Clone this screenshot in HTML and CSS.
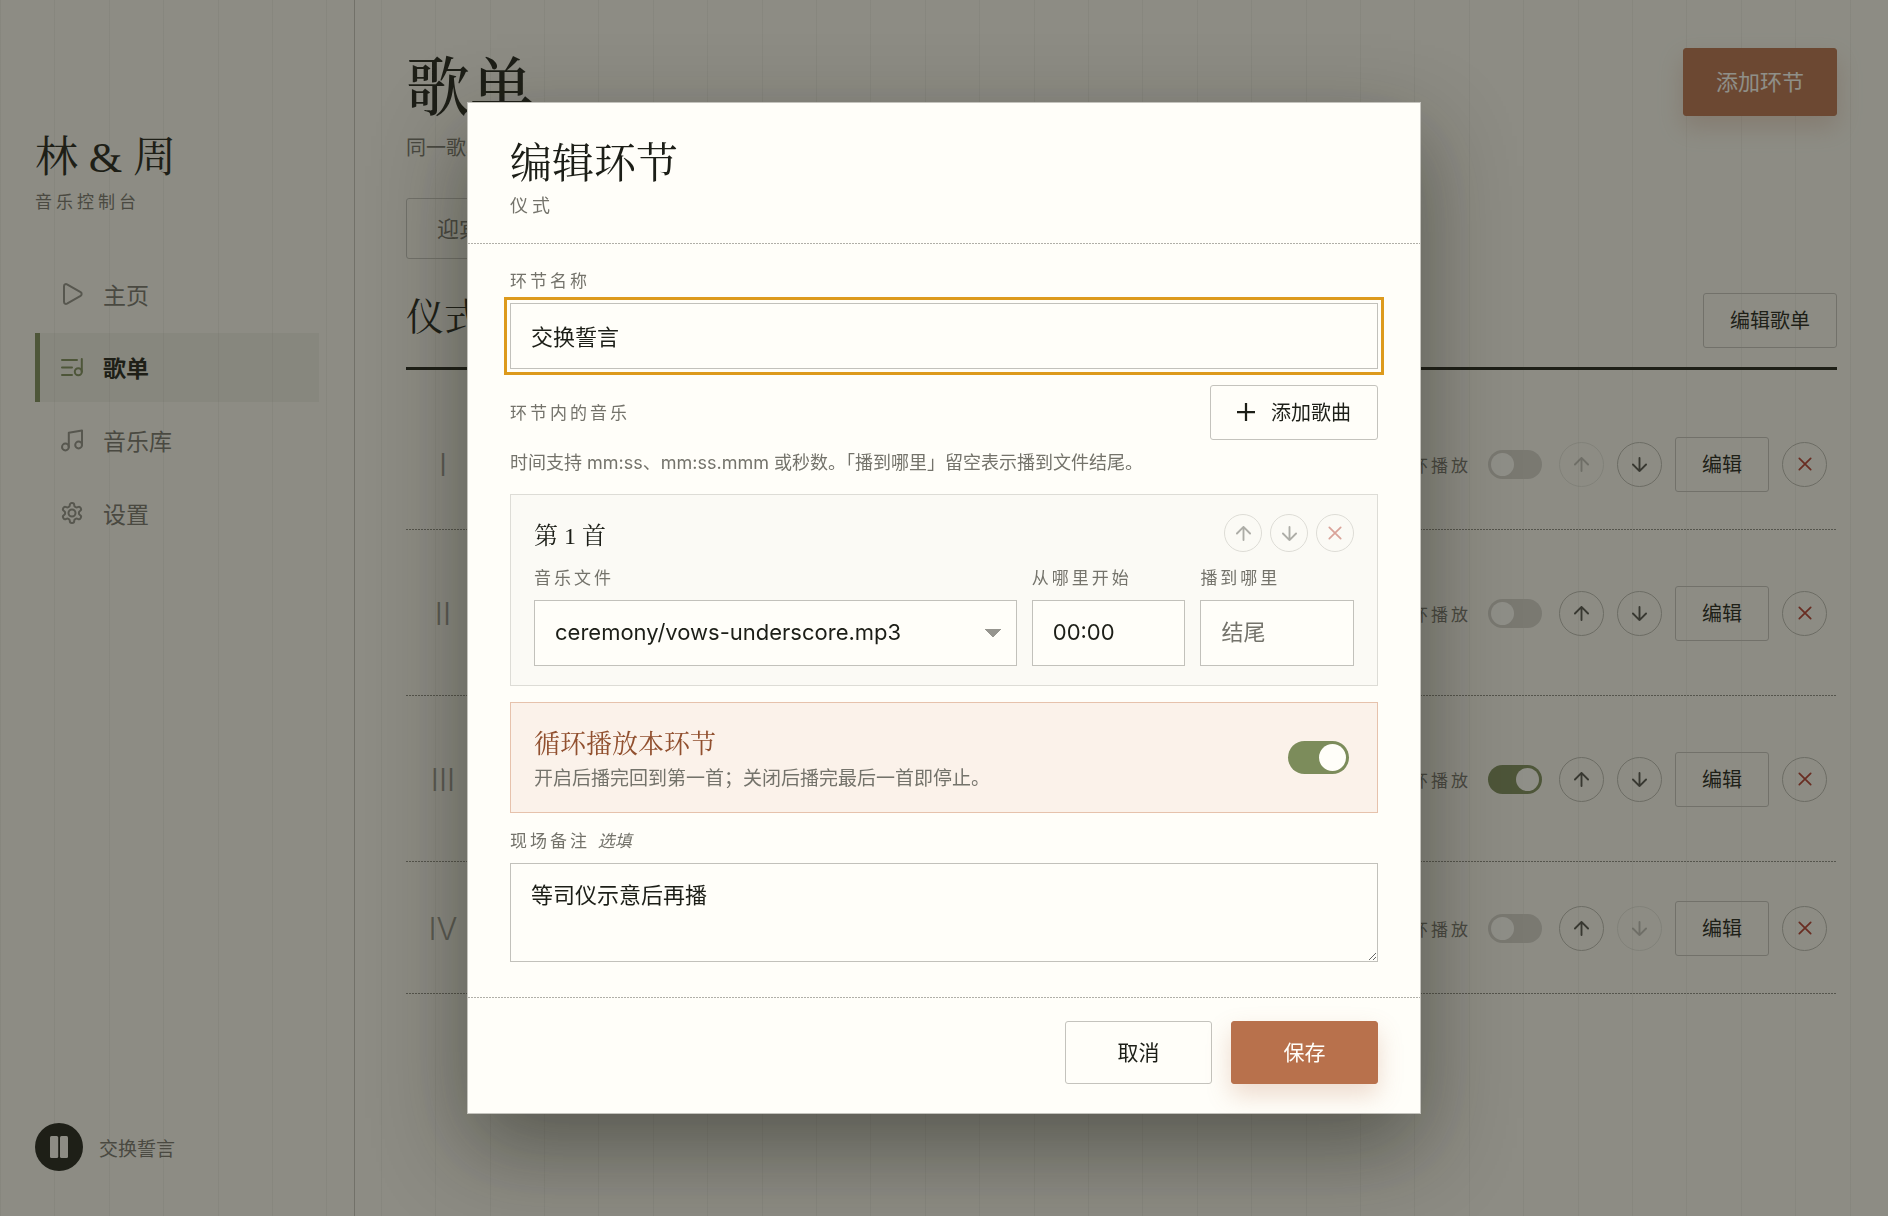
FILE: index.html
```html
<!DOCTYPE html>
<html lang="zh-CN">
<head>
    <meta charset="UTF-8">
    <meta name="viewport" content="width=device-width, initial-scale=1.0">
    <title>歌单 - 音乐控制台</title>
    <link rel="stylesheet" href="styles.css">
</head>
<body>
    <!-- Shared icons -->
    <svg class="sprite" aria-hidden="true">
        <symbol id="up" viewBox="0 0 16 16"><path d="M8 15V1M1 8l7-7 7 7"/></symbol>
        <symbol id="down" viewBox="0 0 16 16"><path d="M8 1v14M1 8l7 7 7-7"/></symbol>
        <symbol id="close" viewBox="0 0 16 16"><path d="M1.500 1.500l13 13M14.500 1.500l-13 13"/></symbol>
        <symbol id="plus" viewBox="0 0 16 16"><path d="M8 0v16M0 8h16"/></symbol>
    </svg>

    <div class="layout">
        <aside class="sidebar">
            <div class="brand">林 &amp; 周</div>
            <div class="brand-sub">音乐控制台</div>
            <nav class="nav">
                <a class="nav-item" href="#home">
                    <svg class="nav-icon" viewBox="0 0 22 22"><path d="M3 3.200v15.600c0 1.800 1.600 2.600 3 1.900l13.600-7.900c1.400-.8 1.400-2.800 0-3.600L6 1.300C4.600.6 3 1.400 3 3.200z"/></svg>
                    主页
                </a>
                <a class="nav-item active" href="#playlist" aria-current="page">
                    <svg class="nav-icon" viewBox="0 0 22 22"><path d="M1 4h15M1 11.500h10M1 19h10M20.800 3v12.700"/><circle cx="17.300" cy="15.700" r="3.500"/></svg>
                    歌单
                </a>
                <a class="nav-item" href="#library">
                    <svg class="nav-icon" viewBox="0 0 22 22"><path d="M7.800 18V3.800l13.200-2.300V16"/><circle cx="4.400" cy="18" r="3.400"/><circle cx="17.600" cy="16" r="3.400"/></svg>
                    音乐库
                </a>
                <a class="nav-item" href="#settings">
                    <svg class="nav-icon" viewBox="1 1 22 22"><path d="M12.220 2h-.44a2 2 0 0 0-2 2v.18a2 2 0 0 1-1 1.730l-.43.25a2 2 0 0 1-2 0l-.15-.08a2 2 0 0 0-2.730.73l-.22.38a2 2 0 0 0 .73 2.730l.15.1a2 2 0 0 1 1 1.720v.51a2 2 0 0 1-1 1.740l-.15.09a2 2 0 0 0-.73 2.730l.22.38a2 2 0 0 0 2.730.73l.15-.08a2 2 0 0 1 2 0l.43.25a2 2 0 0 1 1 1.730V20a2 2 0 0 0 2 2h.44a2 2 0 0 0 2-2v-.18a2 2 0 0 1 1-1.730l.43-.25a2 2 0 0 1 2 0l.15.08a2 2 0 0 0 2.730-.73l.22-.39a2 2 0 0 0-.73-2.730l-.15-.08a2 2 0 0 1-1-1.740v-.5a2 2 0 0 1 1-1.740l.15-.09a2 2 0 0 0 .73-2.730l-.22-.38a2 2 0 0 0-2.730-.73l-.15.08a2 2 0 0 1-2 0l-.43-.25a2 2 0 0 1-1-1.730V4a2 2 0 0 0-2-2z"/><circle cx="12" cy="12" r="3.500"/></svg>
                    设置
                </a>
            </nav>
            <div class="player">
                <button class="pause-btn" type="button" aria-label="暂停">
                    <svg viewBox="0 0 18 22"><rect width="8.200" height="22" rx="1.500"/><rect x="10" width="8" height="22" rx="1.500"/></svg>
                </button>
                <span>交换誓言</span>
            </div>
        </aside>

        <main class="main">
            <header class="page-head">
                <div>
                    <h1>歌单</h1>
                    <p>同一歌单</p>
                </div>
                <button class="btn primary add-btn" type="button">添加环节</button>
            </header>
            <div class="tabs">
                <button class="tab" type="button">迎宾</button>
            </div>
            <div class="section-head">
                <h2>仪式</h2>
                <button class="btn small" type="button">编辑歌单</button>
            </div>
            <ol class="rows">
                <li class="row">
                    <span class="numeral">I</span>
                    <label class="loop-label">循环播放<input class="switch" type="checkbox"></label>
                    <button class="round" type="button" aria-label="上移" disabled><svg><use href="#up"/></svg></button>
                    <button class="round" type="button" aria-label="下移"><svg><use href="#down"/></svg></button>
                    <button class="btn small" type="button">编辑</button>
                    <button class="round danger" type="button" aria-label="删除"><svg><use href="#close"/></svg></button>
                </li>
                <li class="row tall">
                    <span class="numeral">II</span>
                    <label class="loop-label">循环播放<input class="switch" type="checkbox"></label>
                    <button class="round" type="button" aria-label="上移"><svg><use href="#up"/></svg></button>
                    <button class="round" type="button" aria-label="下移"><svg><use href="#down"/></svg></button>
                    <button class="btn small" type="button">编辑</button>
                    <button class="round danger" type="button" aria-label="删除"><svg><use href="#close"/></svg></button>
                </li>
                <li class="row tall">
                    <span class="numeral">III</span>
                    <label class="loop-label">循环播放<input class="switch" type="checkbox" checked></label>
                    <button class="round" type="button" aria-label="上移"><svg><use href="#up"/></svg></button>
                    <button class="round" type="button" aria-label="下移"><svg><use href="#down"/></svg></button>
                    <button class="btn small" type="button">编辑</button>
                    <button class="round danger" type="button" aria-label="删除"><svg><use href="#close"/></svg></button>
                </li>
                <li class="row">
                    <span class="numeral">IV</span>
                    <label class="loop-label">循环播放<input class="switch" type="checkbox"></label>
                    <button class="round" type="button" aria-label="上移"><svg><use href="#up"/></svg></button>
                    <button class="round" type="button" aria-label="下移" disabled><svg><use href="#down"/></svg></button>
                    <button class="btn small" type="button">编辑</button>
                    <button class="round danger" type="button" aria-label="删除"><svg><use href="#close"/></svg></button>
                </li>
            </ol>
        </main>
    </div>

    <div class="overlay">
        <form class="dialog" role="dialog" aria-modal="true" aria-labelledby="dialogTitle">
            <header class="dialog-head">
                <h2 id="dialogTitle">编辑环节</h2>
                <p>仪式</p>
            </header>

            <div class="dialog-body">
                <div class="field">
                    <label for="name">环节名称</label>
                    <input class="control focused" id="name" type="text" value="交换誓言">
                </div>

                <div>
                    <div class="music-head">
                        <span class="label">环节内的音乐</span>
                        <button class="btn small" type="button"><svg class="plus"><use href="#plus"/></svg>添加歌曲</button>
                    </div>
                    <p class="help">时间支持 mm:ss、mm:ss.mmm 或秒数。「播到哪里」留空表示播到文件结尾。</p>
                    <div class="song">
                        <div class="song-head">
                            <h3>第 1 首</h3>
                            <div class="song-actions">
                                <button class="round mini" type="button" aria-label="上移" disabled><svg><use href="#up"/></svg></button>
                                <button class="round mini" type="button" aria-label="下移" disabled><svg><use href="#down"/></svg></button>
                                <button class="round mini danger" type="button" aria-label="删除" disabled><svg><use href="#close"/></svg></button>
                            </div>
                        </div>
                        <div class="song-fields">
                            <div class="field">
                                <label for="file">音乐文件</label>
                                <select class="control" id="file">
                                    <option>ceremony/vows-underscore.mp3</option>
                                </select>
                            </div>
                            <div class="field">
                                <label for="start">从哪里开始</label>
                                <input class="control" id="start" type="text" value="00:00">
                            </div>
                            <div class="field">
                                <label for="end">播到哪里</label>
                                <input class="control" id="end" type="text" placeholder="结尾">
                            </div>
                        </div>
                    </div>
                </div>

                <div class="loop-card">
                    <label for="loop">
                        <strong>循环播放本环节</strong>
                        <span>开启后播完回到第一首；关闭后播完最后一首即停止。</span>
                    </label>
                    <input class="switch large" id="loop" type="checkbox" checked>
                </div>

                <div class="field">
                    <label for="note">现场备注 <em>选填</em></label>
                    <textarea class="control" id="note">等司仪示意后再播</textarea>
                </div>
            </div>

            <footer class="dialog-foot">
                <button class="btn" type="button">取消</button>
                <button class="btn primary" type="button">保存</button>
            </footer>
        </form>
    </div>
</body>
</html>
```

FILE: styles.css
```css
:root {
    --ink: #1c1e17;
    --muted: #74736b;
    --line: #c4c3bd;
    --paper: #fffef9;
    --page: #faf9f1;
    --green: #7c8c5b;
    --clay: #b8714c;
    --rule: rgba(60, 60, 40, 0.06);
    --serif: "Liberation Serif", "Noto Serif CJK SC", "Noto Sans CJK SC", serif;
    --sans: Inter, "Noto Sans CJK SC", sans-serif;
}

* {
    box-sizing: border-box;
}

body {
    margin: 0;
    min-height: 100vh;
    font-family: var(--sans);
    font-size: 20px;
    color: var(--ink);
    background-color: var(--page);
    /* Faint vertical paper lines, five to a tile */
    background-image: linear-gradient(90deg,
        var(--rule) 1px, transparent 1px 54px,
        var(--rule) 54px 55px, transparent 55px 109px,
        var(--rule) 109px 110px, transparent 110px 163px,
        var(--rule) 163px 164px, transparent 164px 218px,
        var(--rule) 218px 219px, transparent 219px);
    background-size: 272px 100%;
}

h1, h2, h3, p {
    margin: 0;
    font-weight: 400;
}

h1, h2, h3 {
    font-family: var(--serif);
}

button, input, select, textarea {
    font-family: inherit;
    color: inherit;
}

button {
    cursor: pointer;
}

svg {
    fill: none;
    stroke: currentColor;
    stroke-width: 2;
    stroke-linecap: round;
    stroke-linejoin: round;
}

.sprite {
    display: none;
}

.layout {
    display: flex;
    min-height: 100vh;
}

/* Sidebar */
.sidebar {
    flex: 0 0 355px;
    display: flex;
    flex-direction: column;
    padding: 132px 35px 45px;
    border-right: 1px solid #c4c3ba;
}

.brand {
    font-family: var(--serif);
    font-size: 43px;
    line-height: 52px;
}

.brand-sub {
    margin-top: 6px;
    font-size: 17px;
    line-height: 24px;
    letter-spacing: 4px;
    color: var(--muted);
}

.nav {
    display: flex;
    flex-direction: column;
    gap: 4px;
    margin-top: 46px;
}

.nav-item {
    display: flex;
    align-items: center;
    gap: 20px;
    height: 69px;
    padding: 0 0 2px 21px;
    border-left: 5px solid transparent;
    font-size: 23px;
    color: var(--muted);
    text-decoration: none;
}

.nav-item.active {
    border-color: var(--green);
    background: rgba(60, 60, 50, 0.06);
    font-weight: 700;
    color: var(--ink);
}

.nav-icon {
    width: 22px;
    height: 22px;
    overflow: visible;
    color: #8f8e86;
}

.active .nav-icon {
    color: var(--green);
}

.player {
    display: flex;
    align-items: center;
    gap: 16px;
    margin-top: auto;
    font-size: 19px;
    color: var(--muted);
}

.pause-btn {
    display: grid;
    place-items: center;
    width: 48px;
    height: 48px;
    padding: 0;
    border: 0;
    border-radius: 50%;
    background: var(--ink);
}

.pause-btn svg {
    width: 18px;
    height: 22px;
    fill: var(--page);
    stroke: none;
}

/* Buttons */
.btn {
    display: inline-flex;
    align-items: center;
    justify-content: center;
    gap: 16px;
    min-width: 147px;
    height: 63px;
    padding: 0 26px 3px;
    border: 1px solid var(--line);
    border-radius: 3px;
    background: transparent;
    font-size: 21px;
}

.btn.small {
    min-width: 94px;
    height: 55px;
    padding-bottom: 2px;
    font-size: 20px;
}

.btn.primary {
    border-color: var(--clay);
    background: var(--clay);
    color: var(--paper);
    box-shadow: 0 11px 25px rgba(184, 113, 76, 0.25);
}

.btn.add-btn {
    height: 68px;
    padding: 0 32px 4px;
    font-size: 22px;
}

.plus {
    width: 18px;
    height: 18px;
    overflow: visible;
}

.round {
    display: grid;
    place-items: center;
    flex: none;
    width: 45px;
    height: 45px;
    padding: 0;
    border: 1px solid #b9b8b0;
    border-radius: 50%;
    background: transparent;
    color: #50514a;
}

.round svg {
    width: 15px;
    height: 15px;
    overflow: visible;
}

.round:disabled {
    opacity: 0.35;
}

.round.danger {
    color: #b23a2c;
}

.round.danger svg {
    width: 14px;
    height: 14px;
}

.round.mini {
    width: 38px;
    height: 38px;
}

.round.mini:disabled {
    opacity: 0.45;
}

.switch {
    appearance: none;
    flex: none;
    width: 54px;
    height: 29px;
    margin: 0;
    padding: 3px;
    border-radius: 17px;
    background: #d4d2cb;
}

.switch::before {
    content: "";
    display: block;
    width: 23px;
    height: 23px;
    border-radius: 50%;
    background: var(--paper);
}

.switch:checked {
    background: var(--green);
}

.switch:checked::before {
    margin-left: auto;
}

.switch.large {
    width: 61px;
    height: 33px;
}

.switch.large::before {
    width: 27px;
    height: 27px;
}

/* Playlist page */
.main {
    flex: 1;
    min-width: 0;
    padding: 48px 51px 48px;
}

.page-head {
    display: flex;
    justify-content: space-between;
    align-items: flex-start;
}

.page-head h1 {
    font-size: 64px;
    font-weight: 500;
    line-height: 82px;
}

.page-head p {
    margin-top: 3px;
    line-height: 30px;
    color: var(--muted);
}

.tabs {
    display: flex;
    margin-top: 35px;
}

.tab {
    height: 61px;
    padding: 0 30px 4px;
    border: 1px solid var(--line);
    border-radius: 3px;
    background: transparent;
    font-size: 22px;
    color: var(--muted);
}

.section-head {
    display: flex;
    justify-content: space-between;
    align-items: flex-end;
    margin-top: 24px;
    padding-bottom: 19px;
    border-bottom: 3px solid var(--ink);
}

.section-head h2 {
    font-size: 38px;
    line-height: 62px;
}

.rows {
    margin: 0;
    padding: 28px 0 0;
    list-style: none;
}

.section-head .btn {
    margin-top: 10px;
}

.row {
    display: flex;
    align-items: center;
    gap: 13px;
    min-height: 132px;
    padding-right: 10px;
    background: repeating-linear-gradient(90deg, #8b8a82 0 2px, transparent 2px 3px) bottom / 100% 1px no-repeat;
}

.row.tall {
    min-height: 166px;
}

.numeral {
    width: 74px;
    font-size: 31px;
    font-weight: 300;
    text-align: center;
    color: #96958d;
}

.loop-label {
    display: flex;
    align-items: center;
    gap: 17px;
    margin-left: auto;
    margin-right: 4px;
    font-size: 17px;
    letter-spacing: 3px;
    color: var(--muted);
}

/* Edit dialog */
.overlay {
    position: fixed;
    inset: 0;
    display: flex;
    align-items: center;
    justify-content: center;
    background: rgba(31, 31, 24, 0.5);
}

.dialog {
    width: 954px;
    max-width: 96%;
    border: 1px solid var(--line);
    background: var(--paper);
    box-shadow: 0 34px 84px rgba(24, 24, 16, 0.45);
}

.dialog-head {
    padding: 38px 42px 25px;
    background: repeating-linear-gradient(90deg, #b0afa8 0 2px, transparent 2px 3px) bottom / 100% 1px no-repeat;
}

.dialog-head h2 {
    font-size: 42px;
    line-height: 46px;
}

.dialog-head p {
    margin-top: 6px;
    font-size: 18px;
    line-height: 26px;
    letter-spacing: 4px;
    color: var(--muted);
}

.dialog-body {
    display: flex;
    flex-direction: column;
    gap: 16px;
    padding: 25px 42px 35px;
}

.field {
    display: flex;
    flex-direction: column;
    gap: 10px;
    min-width: 0;
}

.field label,
.label {
    font-size: 17px;
    line-height: 24px;
    letter-spacing: 3px;
    color: var(--muted);
}

.field em {
    letter-spacing: 0;
}

.control {
    width: 100%;
    height: 66px;
    padding: 0 20px 2px;
    border: 1px solid #c2c1bb;
    border-radius: 0;
    background-color: var(--paper);
    font-size: 22px;
    line-height: 32px;
}

.control::placeholder {
    color: var(--muted);
}

.control.focused {
    outline: 3px solid #dd9a1c;
    outline-offset: 3px;
}

select.control {
    appearance: none;
    background-image: linear-gradient(to top right, transparent 50%, #96958f 50%), linear-gradient(to top left, transparent 50%, #96958f 50%);
    background-position: right 23px center, right 15px center;
    background-repeat: no-repeat;
    background-size: 8px 8px;
}

textarea.control {
    display: block;
    height: 99px;
    padding: 15px 20px;
    resize: vertical;
}

.music-head {
    display: flex;
    align-items: center;
    justify-content: space-between;
}

.help {
    margin: 11px 0 19px;
    font-size: 18px;
    line-height: 24px;
    color: var(--muted);
}

.song {
    padding: 19px 23px;
    border: 1px solid #dddcd6;
    background: #fbfaf5;
}

.song-head {
    display: flex;
    align-items: center;
    justify-content: space-between;
    margin-bottom: 14px;
}

.song-head h3 {
    font-size: 24px;
}

.song-actions {
    display: flex;
    gap: 8px;
}

.song-fields {
    display: grid;
    grid-template-columns: 22fr 7fr 7fr;
    gap: 15px;
}

.loop-card {
    display: flex;
    align-items: center;
    justify-content: space-between;
    padding: 24px 28px 19px 23px;
    border: 1px solid #e6c2ac;
    background: #fbf2ea;
}

.loop-card strong,
.loop-card span {
    display: block;
}

.loop-card strong {
    font-family: var(--serif);
    font-size: 26px;
    font-weight: 400;
    line-height: 36px;
    color: #91502f;
}

.loop-card span {
    margin-top: 2px;
    font-size: 19px;
    line-height: 28px;
    color: var(--muted);
}

/* Keeps the switch level with the card's middle */
.loop-card .switch {
    margin-bottom: 5px;
}

.dialog-foot {
    display: flex;
    justify-content: flex-end;
    gap: 19px;
    padding: 24px 42px 29px;
    background: repeating-linear-gradient(90deg, #b0afa8 0 2px, transparent 2px 3px) top / 100% 1px no-repeat;
}
```
